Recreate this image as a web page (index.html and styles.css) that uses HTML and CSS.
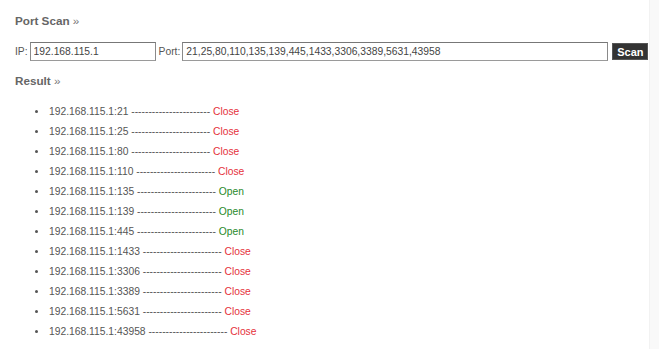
FILE: index.html
```html
<!DOCTYPE html>
<html>
<head>
<meta charset="utf-8">
<link rel="stylesheet" href="styles.css">
</head>
<body>
<div class="page">
  <h2 class="heading">Port Scan <span class="raquo">»</span></h2>
  <form class="scan-form">
    <label class="lbl">IP:</label>
    <input class="field field-ip" type="text" value="192.168.115.1">
    <label class="lbl lbl-port">Port:</label>
    <input class="field field-port" type="text" value="21,25,80,110,135,139,445,1433,3306,3389,5631,43958">
    <button class="btn" type="button">Scan</button>
  </form>
  <h2 class="heading heading-result">Result <span class="raquo">»</span></h2>
  <ul class="results">
    <li>192.168.115.1:21 ----------------------- <span class="close">Close</span></li>
    <li>192.168.115.1:25 ----------------------- <span class="close">Close</span></li>
    <li>192.168.115.1:80 ----------------------- <span class="close">Close</span></li>
    <li>192.168.115.1:110 ----------------------- <span class="close">Close</span></li>
    <li>192.168.115.1:135 ----------------------- <span class="open">Open</span></li>
    <li>192.168.115.1:139 ----------------------- <span class="open">Open</span></li>
    <li>192.168.115.1:445 ----------------------- <span class="open">Open</span></li>
    <li>192.168.115.1:1433 ----------------------- <span class="close">Close</span></li>
    <li>192.168.115.1:3306 ----------------------- <span class="close">Close</span></li>
    <li>192.168.115.1:3389 ----------------------- <span class="close">Close</span></li>
    <li>192.168.115.1:5631 ----------------------- <span class="close">Close</span></li>
    <li>192.168.115.1:43958 ----------------------- <span class="close">Close</span></li>
  </ul>
</div>
</body>
</html>
```
FILE: styles.css
```css
html, body {
  margin: 0;
  padding: 0;
  background: #f9f9f9;
}
body {
  font-family: "Liberation Sans", Arial, sans-serif;
  color: #555;
}
.page {
  width: 650px;
  height: 349px;
  box-sizing: border-box;
  background: #fff;
  border-right: 1px solid #f2f2f2;
  padding: 14px 0 0 15px;
  overflow: hidden;
}
.heading {
  margin: 0;
  font-size: 11.7px;
  line-height: 14px;
  font-weight: bold;
  color: #666;
}
.raquo {
  font-weight: normal;
  color: #777;
}
.scan-form {
  display: flex;
  align-items: center;
  margin: 14px 0 13px;
  height: 19px;
  font-size: 10.3px;
}
.lbl {
  color: #555;
  margin-right: 2px;
}
.lbl-port {
  margin-left: 3px;
}
.field {
  box-sizing: border-box;
  height: 19px;
  margin: 0;
  padding: 0 3px;
  border: 1px solid #8a8a8a;
  border-top-color: #777;
  border-bottom-color: #9a9a9a;
  background: #fff;
  font-family: "Liberation Sans", Arial, sans-serif;
  font-size: 10.3px;
  color: #444;
  outline: none;
}
.field-ip {
  width: 126px;
}
.field-port {
  width: 426px;
}
.btn {
  box-sizing: border-box;
  height: 17px;
  width: 36px;
  margin: 0 0 0 4px;
  padding: 0;
  border: 1px solid #555;
  background: #333;
  color: #fff;
  font-family: "Liberation Sans", Arial, sans-serif;
  font-size: 11px;
  font-weight: bold;
}
.results {
  list-style: none;
  margin: 13px 0 0 20px;
  padding: 0;
  font-size: 10.3px;
  color: #555;
}
.results li {
  display: flex;
  align-items: center;
  height: 20px;
  white-space: pre;
}
.results li::before {
  content: "";
  width: 3px;
  height: 3px;
  border-radius: 50%;
  background: #555;
  margin-right: 11px;
  flex: none;
}
.close {
  color: #e5323c;
}
.open {
  color: #2a8a2a;
}
```
